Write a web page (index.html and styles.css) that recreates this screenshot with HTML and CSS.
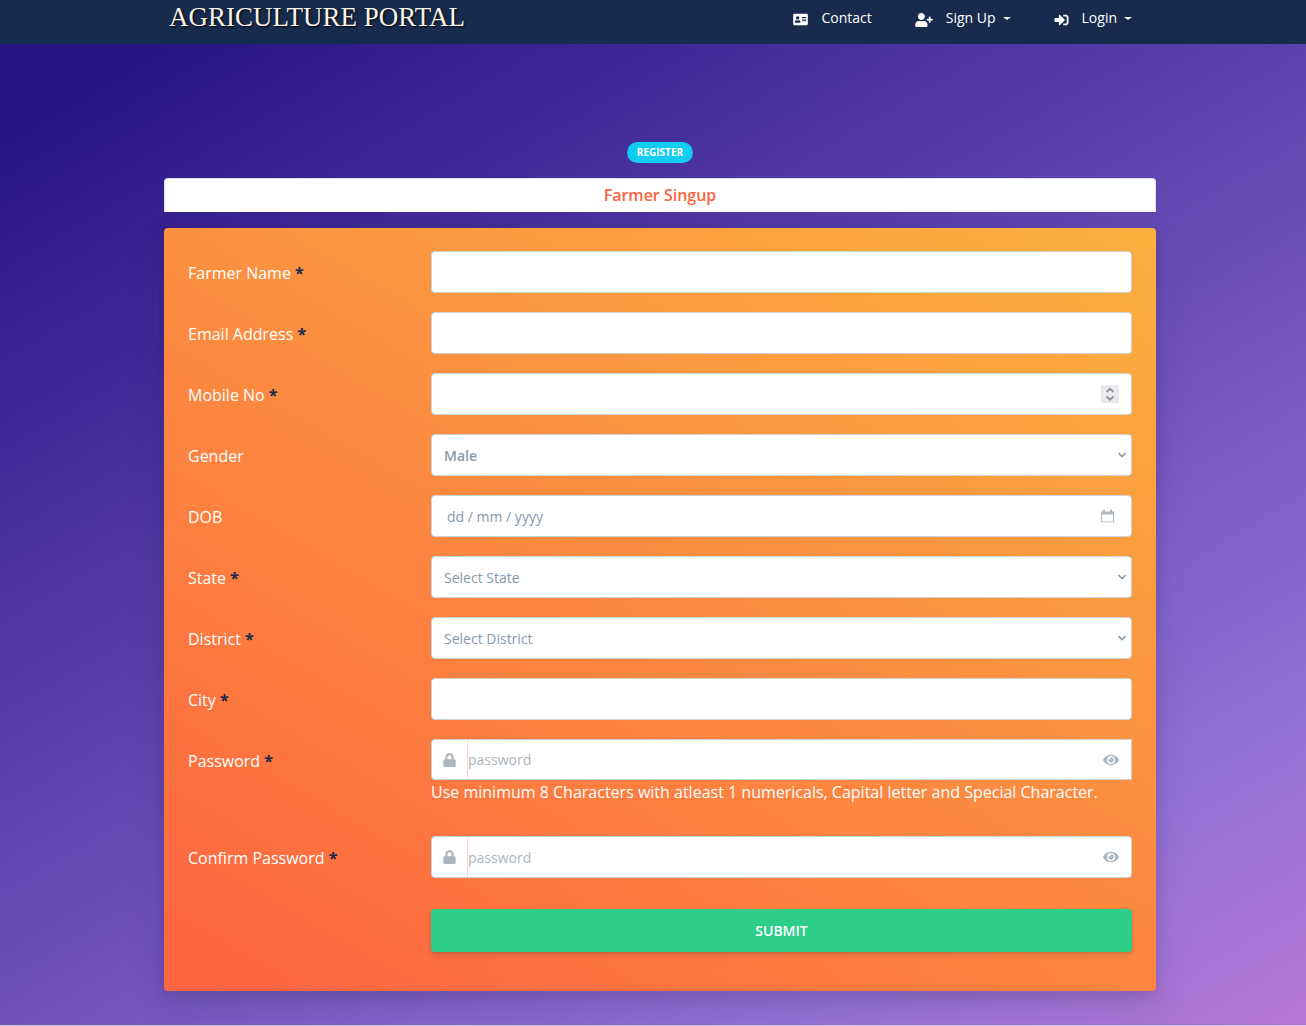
FILE: index.html
```html
<!DOCTYPE html>
<html lang="en">
<head>
<meta charset="utf-8">
<meta name="viewport" content="width=device-width, initial-scale=1">
<title>Agriculture Portal</title>
<link rel="stylesheet" href="styles.css">
</head>
<body>
<svg class="sprite" aria-hidden="true">
  <symbol id="card" viewBox="0 0 576 512"><path d="M528 32H48C21.500 32 0 53.500 0 80v352c0 26.500 21.500 48 48 48h480c26.500 0 48-21.500 48-48V80c0-26.500-21.500-48-48-48zm-352 96c35.300 0 64 28.700 64 64s-28.700 64-64 64-64-28.700-64-64 28.700-64 64-64zm112 236.800c0 10.600-10 19.200-22.400 19.200H86.400C74 384 64 375.400 64 364.800v-19.200c0-31.800 30.100-57.600 67.200-57.600h5c12.300 5.100 25.700 8 39.800 8s27.600-2.900 39.800-8h5c37.100 0 67.200 25.800 67.200 57.600v19.200zM512 312c0 4.400-3.600 8-8 8H360c-4.400 0-8-3.600-8-8v-16c0-4.400 3.600-8 8-8h144c4.400 0 8 3.600 8 8v16zm0-64c0 4.400-3.600 8-8 8H360c-4.400 0-8-3.600-8-8v-16c0-4.400 3.600-8 8-8h144c4.400 0 8 3.600 8 8v16zm0-64c0 4.400-3.600 8-8 8H360c-4.400 0-8-3.600-8-8v-16c0-4.400 3.600-8 8-8h144c4.400 0 8 3.600 8 8v16z"/></symbol>
  <symbol id="user-plus" viewBox="0 0 640 512"><path d="M624 208h-64v-64c0-8.800-7.200-16-16-16h-32c-8.800 0-16 7.200-16 16v64h-64c-8.800 0-16 7.200-16 16v32c0 8.800 7.200 16 16 16h64v64c0 8.800 7.200 16 16 16h32c8.800 0 16-7.200 16-16v-64h64c8.800 0 16-7.200 16-16v-32c0-8.800-7.200-16-16-16zm-400 48c70.700 0 128-57.300 128-128S294.700 0 224 0 96 57.300 96 128s57.300 128 128 128zm89.600 32h-16.700c-22.200 10.200-46.900 16-72.900 16s-50.600-5.800-72.900-16h-16.700C60.200 288 0 348.200 0 422.400V464c0 26.500 21.500 48 48 48h352c26.500 0 48-21.500 48-48v-41.600c0-74.200-60.200-134.400-134.400-134.400z"/></symbol>
  <symbol id="sign-in" viewBox="0 0 512 512"><path d="M416 448h-84c-6.600 0-12-5.400-12-12v-40c0-6.600 5.400-12 12-12h84c17.700 0 32-14.300 32-32V160c0-17.700-14.300-32-32-32h-84c-6.600 0-12-5.400-12-12V76c0-6.600 5.400-12 12-12h84c53 0 96 43 96 96v192c0 53-43 96-96 96zm-47-209L201 71c-15-15-41-4.500-41 17v96H24c-13.300 0-24 10.700-24 24v96c0 13.300 10.700 24 24 24h136v96c0 21.500 26 32 41 17l168-168c9.300-9.400 9.300-24.600 0-34z"/></symbol>
  <symbol id="lock" viewBox="0 0 448 512"><path d="M400 224h-24v-72C376 68.200 307.800 0 224 0S72 68.200 72 152v72H48c-26.500 0-48 21.500-48 48v192c0 26.500 21.500 48 48 48h352c26.500 0 48-21.500 48-48V272c0-26.500-21.500-48-48-48zm-104 0H152v-72c0-39.700 32.300-72 72-72s72 32.300 72 72v72z"/></symbol>
  <symbol id="eye" viewBox="0 0 576 512"><path d="M572.500 241.400C518.300 135.600 410.900 64 288 64S57.700 135.600 3.500 241.400a32.400 32.400 0 0 0 0 29.200C57.700 376.400 165.100 448 288 448s230.300-71.600 284.500-177.400a32.400 32.400 0 0 0 0-29.200zM288 400a144 144 0 1 1 144-144 143.900 143.900 0 0 1-144 144zm0-240a95.300 95.300 0 0 0-25.300 3.800 47.900 47.900 0 0 1-66.900 66.900A95.800 95.800 0 1 0 288 160z"/></symbol>
  <symbol id="chevron" viewBox="0 0 10 8"><path d="M1.500 2 5 5.500 8.500 2" fill="none" stroke="currentColor" stroke-width="1.600"/></symbol>
  <symbol id="calendar" viewBox="0 0 13 13"><path d="M0 2h2V0h2v2h5V0h2v2h2v11H0zM1 5v7h11V5z" fill-rule="evenodd"/></symbol>
  <symbol id="steps" viewBox="0 0 18 18"><path d="M5.500 7 9 3.800 12.500 7M5.500 11.500 9 14.700l3.500-3.200" fill="none" stroke="currentColor" stroke-width="1.800"/></symbol>
</svg>

<header class="navbar">
  <div class="container navbar-inner">
    <a class="brand" href="#">AGRICULTURE PORTAL</a>
    <nav class="nav-links">
      <a class="nav-link" href="#"><svg class="icon icon-card"><use href="#card"/></svg>Contact</a>
      <a class="nav-link" href="#"><svg class="icon icon-user"><use href="#user-plus"/></svg><span class="dropdown">Sign Up</span></a>
      <a class="nav-link" href="#"><svg class="icon icon-login"><use href="#sign-in"/></svg><span class="dropdown">Login</span></a>
    </nav>
  </div>
</header>

<main class="section">
  <div class="container">
    <div class="badge-row"><span class="badge">REGISTER</span></div>
    <h1 class="title">Farmer Singup</h1>
    <form class="card">
      <div class="row">
        <label for="name">Farmer Name <b>*</b></label>
        <input class="control" id="name" type="text">
      </div>
      <div class="row">
        <label for="email">Email Address <b>*</b></label>
        <input class="control" id="email" type="email">
      </div>
      <div class="row">
        <label for="mobile">Mobile No <b>*</b></label>
        <div class="field">
          <input class="control" id="mobile" type="number">
          <svg class="adorn adorn-steps"><use href="#steps"/></svg>
        </div>
      </div>
      <div class="row">
        <label for="gender">Gender</label>
        <div class="field">
          <select class="control strong" id="gender"><option>Male</option><option>Female</option></select>
          <svg class="adorn adorn-chevron"><use href="#chevron"/></svg>
        </div>
      </div>
      <div class="row">
        <label for="dob">DOB</label>
        <div class="field">
          <input class="control date" id="dob" type="text" placeholder="dd / mm / yyyy">
          <svg class="adorn adorn-calendar"><use href="#calendar"/></svg>
        </div>
      </div>
      <div class="row">
        <label for="state">State <b>*</b></label>
        <div class="field">
          <select class="control" id="state"><option>Select State</option></select>
          <svg class="adorn adorn-chevron"><use href="#chevron"/></svg>
        </div>
      </div>
      <div class="row">
        <label for="district">District <b>*</b></label>
        <div class="field">
          <select class="control" id="district"><option>Select District</option></select>
          <svg class="adorn adorn-chevron"><use href="#chevron"/></svg>
        </div>
      </div>
      <div class="row">
        <label for="city">City <b>*</b></label>
        <input class="control" id="city" type="text">
      </div>
      <div class="row">
        <label for="password">Password <b>*</b></label>
        <div>
          <div class="control group square">
            <span class="prepend"><svg class="icon-lock"><use href="#lock"/></svg></span>
            <input class="bare" id="password" type="password" placeholder="password">
            <button class="reveal" type="button" aria-label="Show password"><svg class="icon-eye"><use href="#eye"/></svg></button>
          </div>
          <p class="help">Use minimum 8 Characters with atleast 1 numericals, Capital letter and Special Character.</p>
        </div>
      </div>
      <div class="row confirm">
        <label for="confirm">Confirm Password <b>*</b></label>
        <div class="control group">
          <span class="prepend"><svg class="icon-lock"><use href="#lock"/></svg></span>
          <input class="bare" id="confirm" type="password" placeholder="password">
          <button class="reveal" type="button" aria-label="Show password"><svg class="icon-eye"><use href="#eye"/></svg></button>
        </div>
      </div>
      <div class="row actions">
        <button class="submit" type="submit">SUBMIT</button>
      </div>
    </form>
  </div>
</main>
</body>
</html>
```
FILE: styles.css
```css
* { box-sizing: border-box; }

body {
  margin: 0;
  background: #c9c5cf;
  font-family: "Open Sans", sans-serif;
  font-size: 16px;
  line-height: 24px;
  color: #fff;
}

.sprite { position: absolute; width: 0; height: 0; }
svg { fill: currentColor; }

.container { max-width: 992px; margin: 0 auto; }

.navbar {
  background: #172b4d;
  padding: 0 16px 0 30px;
}

.navbar-inner {
  display: flex;
  justify-content: space-between;
  align-items: flex-start;
  height: 44px;
  padding: 0 24px 0 5px;
}

.brand {
  font-family: "Liberation Serif", serif;
  font-size: 27px;
  line-height: 35px;
  color: #f6f3ea;
  text-decoration: none;
  text-shadow: 1px 1px 2px #000;
  white-space: nowrap;
}

.nav-links { display: flex; gap: 43px; }

.nav-link {
  display: flex;
  align-items: center;
  gap: 13px;
  font-size: 14px;
  line-height: 36px;
  color: #fff;
  text-decoration: none;
}

.icon { height: 14px; margin-top: 3px; }
.icon-card { width: 15px; height: 13px; }
.icon-user { width: 18px; }
.icon-login { width: 15px; }

.dropdown { display: flex; align-items: center; gap: 7px; }
.dropdown::after {
  content: "";
  border: 4px solid transparent;
  border-top: 3px solid #fff;
  border-bottom: 0;
}

.section {
  padding: 98px 16px 34px 30px;
  background: linear-gradient(150deg, #281483 80px, #8f6ed5 1200px, #d782d9 1760px);
}

.badge-row { display: flex; justify-content: center; }

.badge {
  padding: 0 10px;
  border-radius: 11px;
  background: #11cdef;
  font-size: 10px;
  font-weight: 700;
  line-height: 21px;
}

.title {
  margin: 15px 0 16px;
  border: 1px solid #dee2e6;
  border-bottom: 0;
  border-radius: 4px 4px 0 0;
  background: #fff;
  color: #fb6340;
  font-size: 16px;
  font-weight: 600;
  line-height: 33px;
  text-align: center;
}

.card {
  display: flex;
  flex-direction: column;
  gap: 19px;
  padding: 23px 24px 39px;
  border-radius: 4px;
  background: linear-gradient(30deg, #fd6340, #fbb140);
  box-shadow: 0 15px 35px rgba(50, 50, 93, 0.15), 0 5px 15px rgba(0, 0, 0, 0.12);
}

.row {
  display: grid;
  grid-template-columns: 243px 1fr;
  align-items: start;
}

.row label { padding-top: 10px; }
.row b { color: #172b4d; }

.field { position: relative; }

.control {
  display: block;
  width: 100%;
  height: 42px;
  padding: 0 12px;
  border: 1px solid #cad1d7;
  border-radius: 4px;
  background: #fff;
  color: #8898aa;
  font-family: inherit;
  font-size: 14px;
  appearance: none;
}

.control[type="number"] { appearance: textfield; }
.strong { font-weight: 600; }
.date { padding-left: 15px; }
.date::placeholder { color: #8898aa; }

.adorn { position: absolute; top: 50%; transform: translateY(-50%); pointer-events: none; }
.adorn-steps { right: 13px; width: 18px; height: 18px; background: #e9e9ed; color: #8f8f9d; }
.adorn-chevron { right: 5px; width: 10px; height: 8px; color: #8898aa; }
.adorn-calendar { right: 18px; width: 13px; height: 13px; color: #adb5bd; }

.group {
  display: flex;
  align-items: stretch;
  padding: 0;
  overflow: hidden;
}

.square { height: 41px; border-radius: 4px 0 0 4px; }

.prepend {
  display: flex;
  align-items: center;
  justify-content: center;
  width: 36px;
  border-right: 1px solid #fdd8cf;
  color: #adb5bd;
}

.icon-lock { width: 13px; height: 14px; }

.bare {
  flex: 1;
  min-width: 0;
  padding: 0;
  border: 0;
  outline: 0;
  background: transparent;
  color: #8898aa;
  font-family: inherit;
  font-size: 14px;
}

.bare::placeholder { color: #adb5bd; }

.reveal {
  display: flex;
  align-items: center;
  padding: 0 12px;
  border: 0;
  background: transparent;
  color: #adb5bd;
}

.icon-eye { width: 16px; height: 14px; }

.help { margin: 0; }

.confirm { margin-top: 13px; }
.actions { margin-top: 12px; }

.submit {
  grid-column: 2;
  height: 43px;
  border: 0;
  border-radius: 4px;
  background: #2dce89;
  box-shadow: 0 4px 6px rgba(50, 50, 93, 0.11), 0 1px 3px rgba(0, 0, 0, 0.15);
  color: #fff;
  font-family: inherit;
  font-size: 14px;
  font-weight: 600;
}
```
